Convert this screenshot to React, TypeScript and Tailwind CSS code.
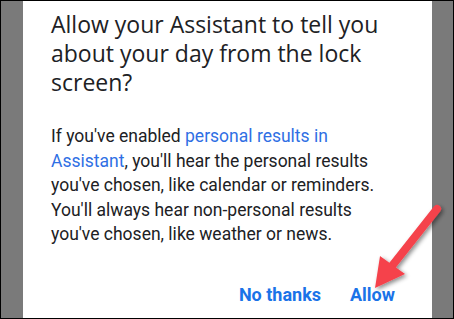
export default function App() {
  return (
    <div className="relative w-[454px] h-[319px] border border-black flex bg-white overflow-hidden">
      <div className="w-[22px] bg-[#7a7a7a]" />
      <div className="flex-1 flex flex-col bg-white pl-[28px]">
        <h1
          className="mt-[9px] pr-[16px] text-[23px] leading-[29px] text-[#202124] tracking-[0px]"
          style={{ fontFamily: '"Open Sans", Roboto, sans-serif' }}
        >
          Allow your Assistant to tell you about your day from the lock screen?
        </h1>
        <p
          className="mt-[27px] pr-[46px] text-[17.5px] leading-[24.5px] text-[#202124]"
          style={{ fontFamily: 'Roboto, "Liberation Sans", sans-serif' }}
        >
          If you've enabled <span className="text-[#2f6fe4]">personal results in Assistant</span>, you'll hear the personal results you've chosen, like calendar or reminders. You'll always hear non-personal results you've chosen, like weather or news.
        </p>
        <div
          className="mt-auto mb-[10px] flex justify-end gap-[29px] pr-[37px] text-[18px] font-bold text-[#1a73e8]"
          style={{ fontFamily: 'Roboto, "Liberation Sans", sans-serif' }}
        >
          <span>No thanks</span>
          <span>Allow</span>
        </div>
      </div>
      <div className="w-[21px] bg-[#7a7a7a]" />
      <svg className="absolute left-0 top-0" width="454" height="319" viewBox="0 0 454 319">
        <defs>
          <filter id="sh" x="-20%" y="-20%" width="140%" height="140%">
            <feDropShadow dx="2" dy="2" stdDeviation="2" floodColor="#000" floodOpacity="0.45" />
          </filter>
        </defs>
        <g filter="url(#sh)">
          <line x1="436" y1="208" x2="387" y2="270" stroke="#f5424b" strokeWidth="8" strokeLinecap="round" />
          <polygon points="374,287 379,255 404,273" fill="#f5424b" />
        </g>
      </svg>
    </div>
  );
}
